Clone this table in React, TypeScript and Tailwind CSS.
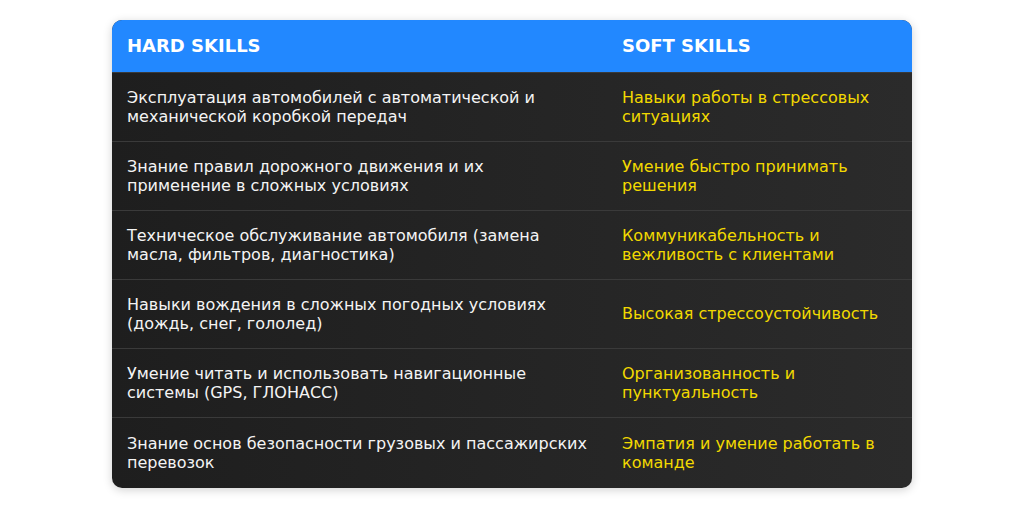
import React from 'react';

const rows: [string, string][] = [
  ['Эксплуатация автомобилей с автоматической и механической коробкой передач', 'Навыки работы в стрессовых ситуациях'],
  ['Знание правил дорожного движения и их применение в сложных условиях', 'Умение быстро принимать решения'],
  ['Техническое обслуживание автомобиля (замена масла, фильтров, диагностика)', 'Коммуникабельность и вежливость с клиентами'],
  ['Навыки вождения в сложных погодных условиях (дождь, снег, гололед)', 'Высокая стрессоустойчивость'],
  ['Умение читать и использовать навигационные системы (GPS, ГЛОНАСС)', 'Организованность и пунктуальность'],
  ['Знание основ безопасности грузовых и пассажирских перевозок', 'Эмпатия и умение работать в команде'],
];

export default function App() {
  return (
    <div className="min-h-[507px] w-full bg-white flex justify-center pt-[20px] font-['DejaVu_Sans',sans-serif]">
      <div className="w-[800px] self-start rounded-[10px] overflow-hidden shadow-[0_2px_10px_rgba(0,0,0,0.18)] bg-gradient-to-r from-[#1e1e1e] to-[#2b2b2b]">
        {/* header */}
        <div className="grid grid-cols-[495px_305px] bg-[#2288ff] border-b border-[#3a3a3a] text-white font-bold text-[18px] leading-[22px]">
          <div className="px-[15px] py-[15px]">HARD SKILLS</div>
          <div className="px-[15px] py-[15px]">SOFT SKILLS</div>
        </div>

        {rows.map(([hard, soft], i) => {
          const last = i === rows.length - 1;
          return (
            <div
              key={i}
              className={`grid grid-cols-[495px_305px] text-[16px] leading-[19.5px] ${
                last ? 'h-[70px]' : 'h-[69px] border-b border-[#3a3a3a]'
              }`}
            >
              <div className="px-[15px] text-[#f4f4f4] flex items-center">{hard}</div>
              <div className="px-[15px] text-[#f2d900] flex items-center">{soft}</div>
            </div>
          );
        })}
      </div>
    </div>
  );
}
